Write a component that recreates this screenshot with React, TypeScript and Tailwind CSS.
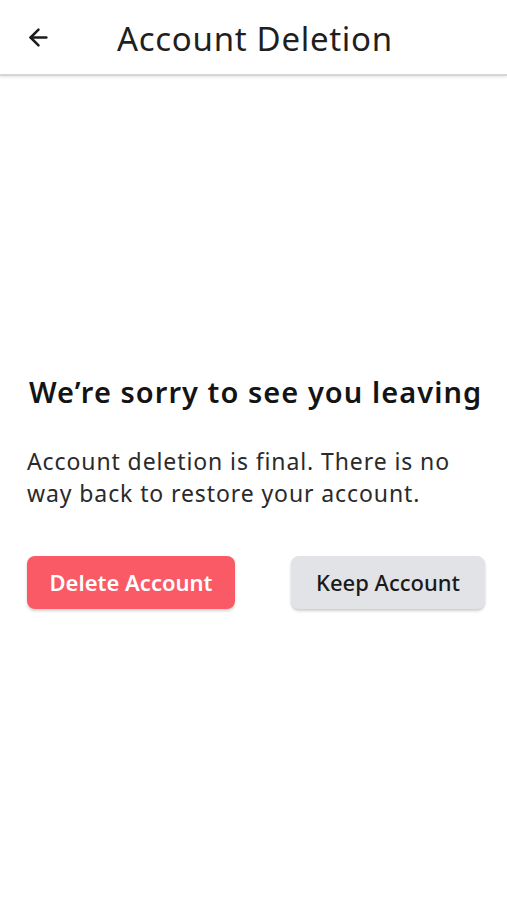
import { ArrowLeft } from 'lucide-react';

// Account deletion confirmation screen

const FONT = { fontFamily: '"Noto Sans", "Open Sans", sans-serif' };

function Header() {
  return (
    <div className="flex h-[76px] items-center border-b-2 border-[#d6d6d6] bg-white shadow-[0_1px_3px_rgba(0,0,0,0.12)]">
      <button className="ml-[22px] flex h-8 w-8 items-center justify-center text-[#1c1c1c]">
        <ArrowLeft size={27} strokeWidth={2.2} />
      </button>
      <h1 className="ml-[63px] mt-[3px] text-[33px] font-normal leading-[40px] tracking-[0.7px] text-[#1f1f1f]">
        Account Deletion
      </h1>
    </div>
  );
}

export default function App() {
  return (
    <div className="flex h-[900px] w-full flex-col bg-white" style={FONT}>
      <Header />
      <div className="flex flex-1 flex-col px-[27px] pt-[296px]">
        <h2 className="whitespace-nowrap pl-[2px] text-[29px] font-semibold leading-[40px] tracking-[1.05px] text-[#141414]">
          We’re sorry to see you leaving
        </h2>
        <p className="mt-[33px] text-[23px] leading-[32px] tracking-[0.9px] text-[#2a2a2a]">
          Account deletion is final. There is no way back to restore your account.
        </p>
        <div className="mt-[47px] flex items-center justify-between">
          <button className="h-[53px] w-[208px] rounded-[8px] bg-[#fa5a66] text-[22px] font-semibold text-white shadow-[0_2px_3px_rgba(0,0,0,0.18)]">
            Delete Account
          </button>
          <button className="mr-[-5px] h-[53px] w-[194px] rounded-[8px] bg-[#e2e3e6] text-[22px] font-medium text-[#1a1a1a] shadow-[0_2px_3px_rgba(0,0,0,0.2)]">
            Keep Account
          </button>
        </div>
      </div>
    </div>
  );
}
